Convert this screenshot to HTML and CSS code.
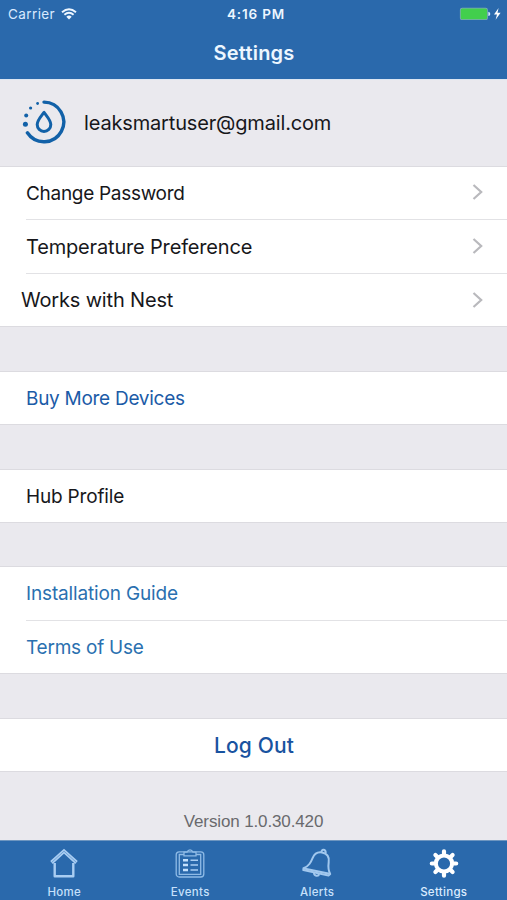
FILE: index.html
```html
<!DOCTYPE html>
<html lang="en">
<head>
<meta charset="utf-8">
<title>Settings</title>
<link rel="stylesheet" href="styles.css">
</head>
<body>
<div class="app">
  <header class="header">
    <div class="status">
      <div class="status-left"><span class="carrier">Carrier</span>
        <svg class="wifi" width="16" height="12" viewBox="0 0 16 12" fill="none" stroke="#edf6ff" stroke-width="1.9"><path d="M1 4.3Q8-1.7 15 4.3M3.4 6.8Q8 2.8 12.6 6.8"/><path d="M5.3 8.7Q8 6.5 10.7 8.7L8 11.4Z" fill="#edf6ff" stroke="none"/></svg>
      </div>
      <span class="time">4:16 PM</span>
      <div class="status-right">
        <svg width="44" height="14" viewBox="0 0 44 14"><rect x=".9" y=".7" width="28" height="12.4" rx="2.2" fill="#7da6bd"/><rect x="1.7" y="1.5" width="26.4" height="10.8" rx="1.6" fill="#42cf4d"/><path d="M29.3 4.7q2 .4 2 2.2t-2 2.2z" fill="#d5eaff"/><path d="M39.6 1 35 7.6h3l-1.4 5.2 5-7h-3.1z" fill="#fff"/></svg>
      </div>
    </div>
    <h1 class="title"><span>Settings</span></h1>
  </header>
  <main class="content">
    <section class="profile">
      <svg class="logo" width="46" height="46" viewBox="0 0 46 46" fill="none" stroke="#1261a8"><path d="M23 3.1A19.8 19.8 0 1 1 6.4 33.8" stroke-width="3.4" stroke-linecap="round"/><path d="M23 13.4C20.5 17 16.2 21.3 16.2 25.6a6.8 6.8 0 0 0 13.6 0C29.8 21.3 25.5 17 23 13.4Z" stroke-width="3" stroke-linejoin="round"/><g fill="#1261a8" stroke="none"><circle cx="4.4" cy="25.2" r="2.5"/><circle cx="5.2" cy="16.4" r="2"/><circle cx="9.6" cy="9" r="1.6"/><circle cx="16.6" cy="4.5" r="1.4"/></g></svg>
      <span class="email">leaksmartuser@gmail.com</span>
    </section>
    <section class="group">
      <div class="row"><span class="t-change">Change Password</span><svg class="chevron" width="12" height="18" viewBox="0 0 12 18"><path d="M1.5 2 9.2 9 1.5 16"/></svg></div>
      <div class="row"><span class="t-temp">Temperature Preference</span><svg class="chevron" width="12" height="18" viewBox="0 0 12 18"><path d="M1.5 2 9.2 9 1.5 16"/></svg></div>
      <div class="row nest"><span class="t-nest">Works with Nest</span><svg class="chevron" width="12" height="18" viewBox="0 0 12 18"><path d="M1.5 2 9.2 9 1.5 16"/></svg></div>
    </section>
    <section class="group"><div class="row buy"><span class="t-buy">Buy More Devices</span></div></section>
    <section class="group hub"><div class="row"><span class="t-hub">Hub Profile</span></div></section>
    <section class="group links">
      <div class="row"><span class="t-guide">Installation Guide</span></div>
      <div class="row"><span class="t-terms">Terms of Use</span></div>
    </section>
    <section class="group last"><div class="row logout"><span class="t-logout">Log Out</span></div></section>
    <p class="version"><span>Version 1.0.30.420</span></p>
  </main>
  <nav class="tabs">
    <div class="tab"><svg width="32" height="32" viewBox="0 0 32 32" fill="none" stroke="#a9cdf2"><path d="M6.7 15v13.2h18.6V15" stroke-width="2.4" stroke-linejoin="round"/><path d="M3.5 14.5 16 3.2l12.5 11.3" stroke-width="3.8"/><path d="M3.5 14.5 16 3.2l12.5 11.3" stroke="#5790cc" stroke-width=".7"/></svg><span class="t-home">Home</span></div>
    <div class="tab events"><svg width="32" height="32" viewBox="0 0 32 32" fill="none" stroke="#8fbbe6" stroke-width="1.3"><rect x="2.2" y="3.8" width="27.6" height="25.2" rx="3"/><path d="M10 6.5H5.3v19.8h21.4V6.5H22M10 4.2h3Q14 1.8 16 1.8T19 4.2h3v3.6H10Z"/><path d="M9 12.2h5M9 17h5M9 22h5" stroke="#c4e0fc" stroke-width="2.4"/><path d="M16.5 12.2H24M16.5 17H24M16.5 22H24" stroke="#a9cdf2" stroke-width="1.6"/></svg><span class="t-events">Events</span></div>
    <div class="tab"><svg width="32" height="32" viewBox="0 0 32 32" fill="none" stroke="#a2c8ee" stroke-width="2" stroke-linejoin="round"><path d="M2.5 20.2C8 18.2 9.7 14.5 11.7 9.8 13.5 5.6 17 3.8 21 4.5c5 1 7.4 4.6 6.7 9.5-.6 4.7-.5 8.5 1.5 12L27.5 27.6 2.3 22Z"/><path d="M3 20.4 28.5 25.8M20.5 4.2c-.4-3.2 4.3-3.3 4.2.7M13 25c.2 3.2 4.4 3.8 5.2 1.1"/></svg><span class="t-alerts">Alerts</span></div>
    <div class="tab active"><svg width="32" height="32" viewBox="0 0 32 32"><g fill="none" stroke="#fff"><circle cx="16" cy="15.5" r="8.1" stroke-width="4"/><g stroke-width="4.2" stroke-linecap="round"><path d="M16 3.3v3M16 24.7v3M3.8 15.5h3M25.2 15.5h3M7.4 6.9l2 2M22.6 22.1l2 2M7.4 24.1l2-2M22.6 8.9l2-2"/></g></g></svg><span class="t-settings">Settings</span></div>
  </nav>
</div>
</body>
</html>
```

FILE: styles.css
```css
* { box-sizing: border-box; }
body { margin: 0; background: #eae9ee; font-family: Inter, "Liberation Sans", sans-serif; color: #17171b; }
svg { display: block; flex: none; }
.app { width: 507px; height: 900px; display: flex; flex-direction: column; overflow: hidden; }
.header { height: 79px; background: #2a69ac; color: #edf6ff; flex: none; }
.status { height: 27px; display: grid; grid-template-columns: 1fr auto 1fr; align-items: center; padding: 0 4px 0 8px; font-size: 13px; }
.status-left { display: flex; align-items: center; gap: 6px; }
.carrier { font-size: 13.5px; letter-spacing: .4px; color: #d8eaff; }
.time { font-weight: 600; font-size: 13.5px; letter-spacing: .85px; margin-left: 1px; }
.status-right { display: flex; justify-content: flex-end; }
.title { margin: 0; padding-left: 1px; height: 52px; display: flex; align-items: center; justify-content: center; font-size: 20px; font-weight: 600; line-height: 50px; letter-spacing: .22px; }
.content { flex: 1; min-height: 0; }
.profile { height: 87px; padding-left: 21px; display: flex; align-items: center; gap: 17px; font-size: 20px; border-top: 1px solid #dce6f2; }
.email { letter-spacing: -.16px; }
.logo { margin-top: -2px; }
.group { background: #fff; border-top: 1px solid #dcdbe0; border-bottom: 1px solid #dcdbe0; margin-bottom: 44px; font-size: 19px; }
.row { height: 52px; margin-left: 26px; padding-right: 23px; display: flex; align-items: center; justify-content: space-between; white-space: nowrap; }
.row + .row { height: 54px; border-top: 1px solid #e2e2e5; }
.row + .nest { height: 53px; }
.nest > span { margin-left: -5px; }
.chevron { fill: none; stroke: #b9b9bd; stroke-width: 2.2; margin-top: -2px; }
.nest > .chevron { margin-top: -1px; }
.t-change { letter-spacing: -.3px; }
.t-temp { font-size: 20px; letter-spacing: -.17px; }
.t-nest { font-size: 20px; letter-spacing: -.17px; }
.t-buy { letter-spacing: -.28px; }
.t-hub { letter-spacing: -.18px; }
.t-guide { letter-spacing: -.16px; }
.t-terms { letter-spacing: -.22px; }
.t-logout { letter-spacing: .15px; }
.buy { color: #1b5ba7; }
.hub { margin-bottom: 43px; }
.links { color: #2a70b0; }
.links .row { height: 53px; }
.last { margin-bottom: 40px; }
.logout { margin: 0; padding: 0 0 0 1px; justify-content: center; color: #1953a0; font-size: 21px; font-weight: 500; }
.version { margin: 0; text-align: center; font: 17px/20px "Liberation Sans", sans-serif; letter-spacing: -.13px; color: #69696d; }
.tabs { height: 60px; flex: none; background: #2a69ac; border-top: 1px solid #6e96c0; display: grid; grid-template-columns: repeat(4, 126.5px); color: #c6e0fb; padding-left: 1px; }
.tab { display: flex; flex-direction: column; align-items: center; padding-top: 7px; font-size: 11.5px; line-height: 14px; gap: 5px; letter-spacing: .3px; font-weight: 500; }
.events { padding-right: 1px; }
.active { color: #dcecff; }
```
